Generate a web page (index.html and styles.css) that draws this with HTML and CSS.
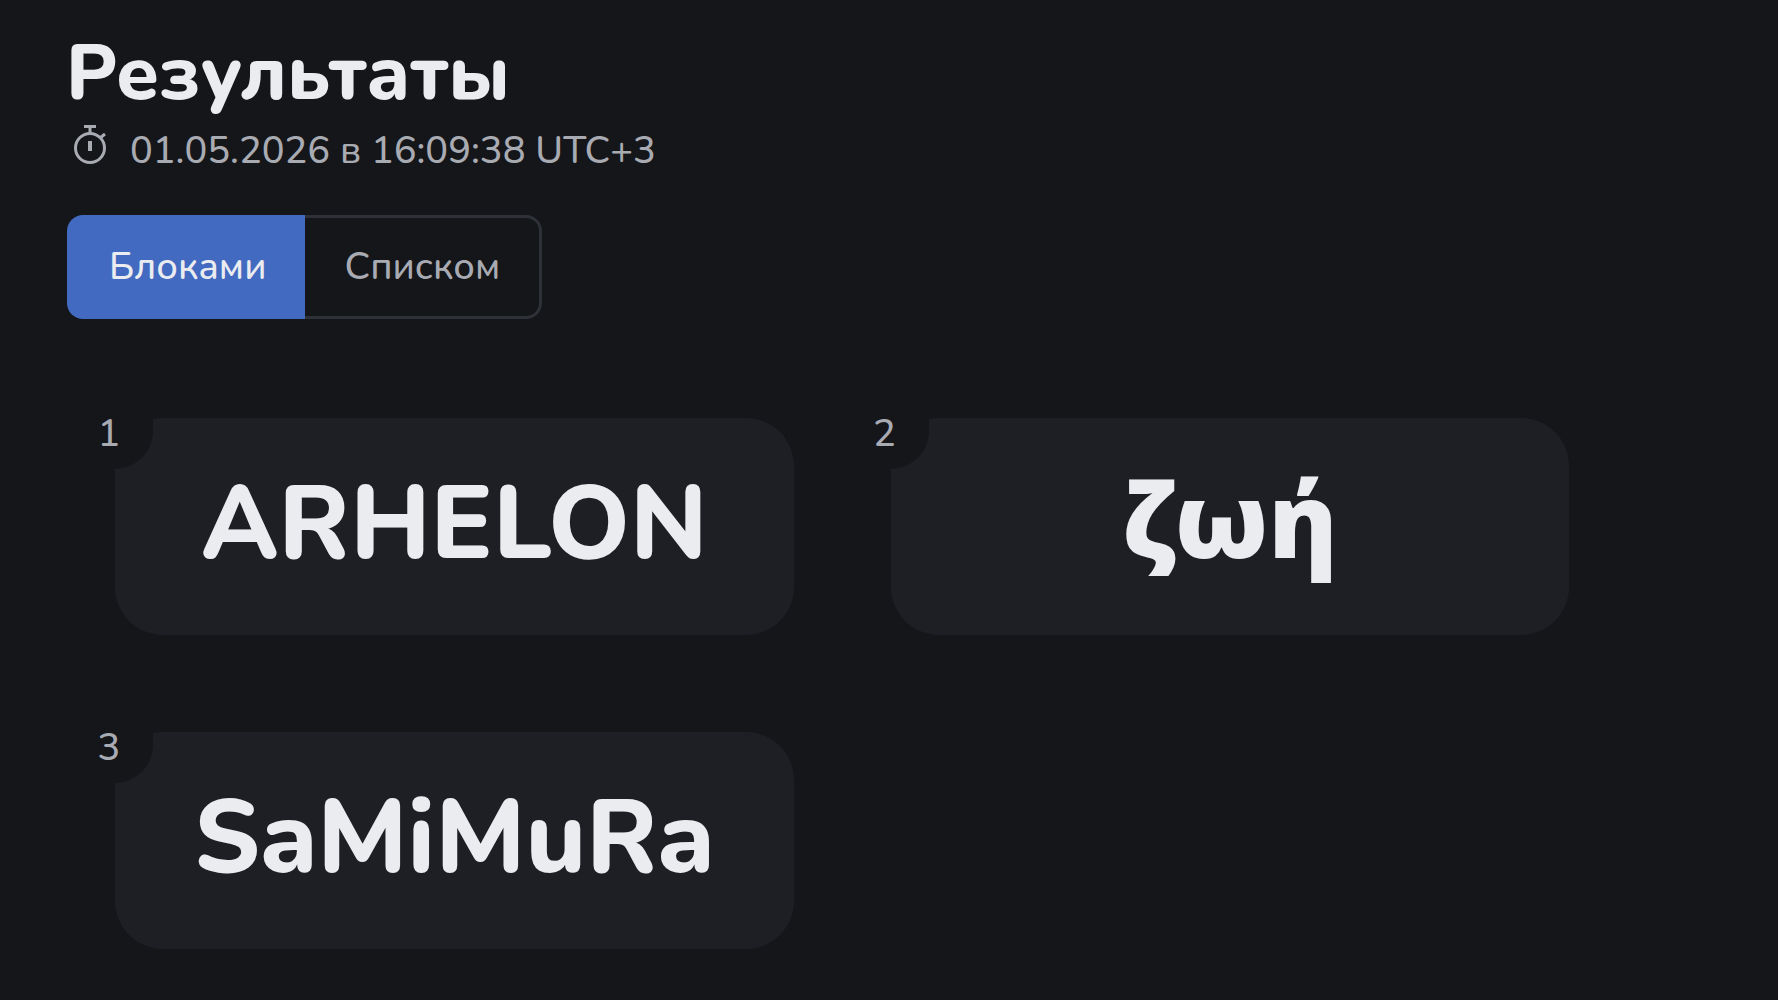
FILE: index.html
```html
<!DOCTYPE html>
<html lang="ru">
<head>
    <meta charset="UTF-8">
    <meta name="viewport" content="width=device-width, initial-scale=1.0">
    <title>Результаты</title>
    <link rel="stylesheet" href="styles.css">
</head>
<body>
    <main class="results">
        <header class="results-header">
            <h1>Результаты</h1>
            <div class="results-time">
                <svg class="timer-icon" viewBox="0 0 36 44" fill="none" stroke="currentColor" stroke-width="3" aria-hidden="true">
                    <circle cx="18" cy="25" r="14.500"/>
                    <path d="M12 3.500h12M18 3.500v8M28 15l5-4"/>
                    <path d="M18 18v10" stroke-width="4"/>
                </svg>
                <time datetime="2026-05-01T16:09:38+03:00">01.05.2026 в 16:09:38 UTC+3</time>
            </div>
        </header>

        <div class="view-switch">
            <button type="button" class="view-button active">Блоками</button>
            <button type="button" class="view-button">Списком</button>
        </div>

        <ol class="winners">
            <li class="winner">
                <span class="winner-number">1</span>
                <span class="winner-name">ARHELON</span>
            </li>
            <li class="winner">
                <span class="winner-number">2</span>
                <span class="winner-name">ζωή</span>
            </li>
            <li class="winner">
                <span class="winner-number">3</span>
                <span class="winner-name">SaMiMuRa</span>
            </li>
        </ol>
    </main>

    <script>
        const buttons = document.querySelectorAll('.view-button');
        const winners = document.querySelector('.winners');

        buttons.forEach((button, index) => {
            button.addEventListener('click', () => {
                buttons.forEach(item => item.classList.remove('active'));
                button.classList.add('active');
                winners.classList.toggle('as-list', index === 1);
            });
        });
    </script>
</body>
</html>
```
FILE: styles.css
```css
* {
    box-sizing: border-box;
}
body {
    margin: 0;
    font-family: 'Nunito', 'Open Sans', sans-serif;
    font-size: 38px;
    font-weight: 500;
    line-height: 54px;
    background: #15161a;
    color: #ebecf0;
}
.results {
    padding: 26px 67px;
}
.results-header h1 {
    margin: 0 0 1px -1px;
    font-size: 77px;
    font-weight: 800;
    line-height: 96px;
}
.results-time {
    display: flex;
    align-items: center;
    gap: 20px;
    color: #a9abb3;
}
.timer-icon {
    width: 36px;
    height: 44px;
    margin: 0 2px 12px 5px;
}
.view-switch {
    display: flex;
    margin-top: 36px;
}
.view-button {
    padding: 22px 39px;
    border: 3px solid #2f3139;
    background: transparent;
    color: #a9abb3;
    font: inherit;
    cursor: pointer;
}
.view-button:first-child {
    border-right: none;
    border-radius: 16px 0 0 16px;
}
.view-button:last-child {
    border-left: none;
    border-radius: 0 16px 16px 0;
}
.view-button.active {
    border-color: #426ac0;
    background: #426ac0;
    color: #ebecf0;
}
.winners {
    display: grid;
    grid-template-columns: repeat(2, 1fr);
    gap: 97px;
    max-width: 1502px;
    margin: 99px 0 0;
    padding: 0 0 0 48px;
    list-style: none;
}
.winners.as-list {
    grid-template-columns: 1fr;
}
.winner {
    position: relative;
    padding: 36px 48px 40px;
    border-radius: 48px;
    background: #1e1f25;
    text-align: center;
}
.winner-number {
    position: absolute;
    top: -20px;
    left: -50px;
    width: 88px;
    height: 71px;
    border-radius: 0 0 38px 0;
    background: #15161a;
    color: #a9abb3;
    line-height: 72px;
}
.winner-name {
    display: block;
    font-size: 103px;
    font-weight: 800;
    line-height: 141px;
}
```
